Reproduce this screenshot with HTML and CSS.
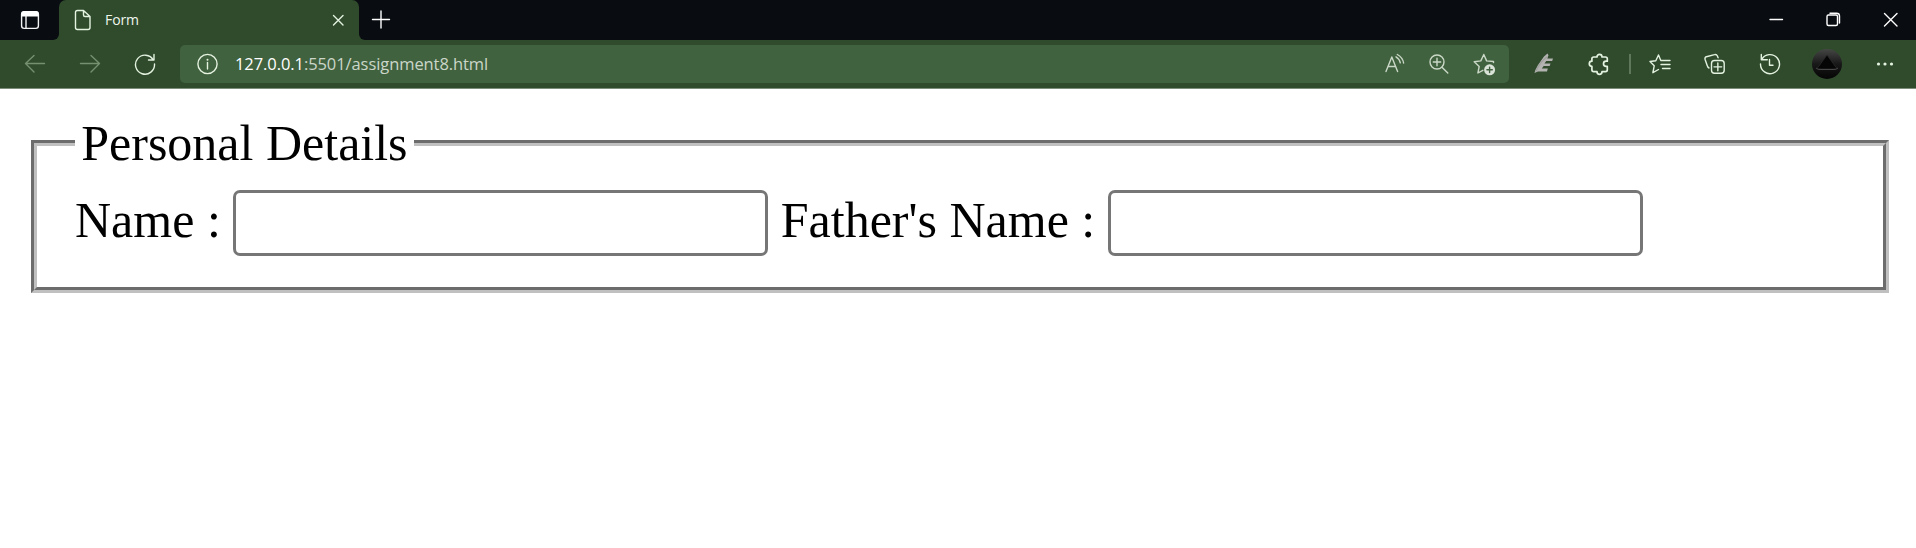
FILE: index.html
```html
<!DOCTYPE html>
<html lang="en">
<head>
<meta charset="utf-8">
<title>Form</title>
<link rel="stylesheet" href="styles.css">
</head>
<body>
<header class="browser">
  <div class="tabstrip">
    <div class="tab-menu">
      <svg class="icon" viewBox="0 0 24 24"><rect x="3.6" y="3.6" width="16.8" height="16.8" rx="2.6"/><path class="solid" d="M3.5 8.5V6Q3.5 3 6.500 3h11Q20.500 3 20.500 6v2.500z"/><path d="M8 8v12"/></svg>
    </div>
    <div class="tab">
      <svg class="icon" viewBox="0 0 24 24"><path d="M4.500 4.500Q4.500 2.500 6.500 2.500h6l6.500 6v11q0 2-2 2H6.500q-2 0-2-2zM12.500 2.500V7q0 1.500 1.500 1.500h5"/></svg>
      <span class="tab-title">Form</span>
      <svg class="icon close" viewBox="0 0 24 24"><path d="M7.500 7.500l9.500 9.500M17 7.500L7.500 17"/></svg>
    </div>
    <svg class="icon new-tab" viewBox="0 0 24 24"><path d="M11 3v17M2.500 11.500h17"/></svg>
    <div class="window-controls">
      <svg class="icon" viewBox="0 0 24 24"><path d="M5 11.500h12.500"/></svg>
      <svg class="icon" viewBox="0 0 24 24"><rect x="5" y="7" width="10.500" height="10.500" rx="1.500"/><path d="M8 5.300h6.500Q17.500 5.300 17.500 8v7"/></svg>
      <svg class="icon" viewBox="0 0 24 24"><path d="M5.500 5.500l12.500 12.500M18 5.500L5.500 18"/></svg>
    </div>
  </div>
  <div class="toolbar">
    <div class="nav">
      <svg class="icon muted" viewBox="0 0 24 24"><path d="M21.500 11.500H2.500M11 3.500l-8.500 8 8.500 8.500"/></svg>
      <svg class="icon muted" viewBox="0 0 24 24"><path d="M2.500 11.500h19M13 3.500l8.500 8-8.500 8.500"/></svg>
      <svg class="icon" viewBox="0 0 24 24"><path d="M20.300 8A9.500 9.500 0 1 0 21.500 12M21 2.500V8h-5.500"/></svg>
    </div>
    <div class="address">
      <svg class="icon" viewBox="0 0 24 24"><circle cx="12.500" cy="12" r="9.600"/><path d="M12.500 10.500v6.500"/><circle class="solid" cx="12.500" cy="7.700" r="1"/></svg>
      <span class="url"><b>127.0.0.1</b>:5501/assignment8.html</span>
      <div class="address-tools">
        <svg class="icon" viewBox="0 0 24 24"><path d="M4 19.500L9.800 5l5.800 14.500M5.900 14.500h7.800M14 4.800q3.500 2 4.300 6M15.300 2.500q5.500 3 6.300 8.500"/></svg>
        <svg class="icon" viewBox="0 0 24 24"><circle cx="10" cy="10" r="7"/><path d="M15 15.200l5.800 5.800M10 6.300v7.400M6.300 10h7.400"/></svg>
        <svg class="icon" viewBox="0 0 24 24"><path d="M21.500 10.500V9.500L14.600 8.900 11.800 2.500 8.800 8.900 2.200 9.700 7.200 14.400 5.900 21l5-2.700"/><circle class="solid" cx="17.600" cy="17.800" r="5.500"/><path class="plus" d="M17.600 15.100v5.400M14.900 17.800h5.400"/></svg>
      </div>
    </div>
    <div class="actions">
      <svg class="icon" viewBox="0 0 24 24"><path class="feather" d="M2.500 21Q3 18 6 13L12 4.500 15.500 1.500l1 1.800-1.200 3.200h5.700l-.8 2.500h-6l-1.700 2.500h6l-.8 2.500h-6L9.800 16.500h6L15 19.500H6z"/><path class="feather-shade" d="M4 19Q9 9 15 5"/></svg>
      <svg class="icon" viewBox="0 0 24 24"><path class="bold" d="M6.700 5h3.300V4.800a2.500 2.500 0 0 1 5 0V5h3.500q1.800 0 1.800 1.800V9.200h-1.200a2.600 2.600 0 0 0 0 5.200h1.200v3.400q0 1.800-1.800 1.800H15v.2a2.500 2.500 0 0 1-5 0v-.2H6.700q-1.800 0-1.800-1.800v-3.400a2.600 2.600 0 0 1 0-5.200V6.800q0-1.800 1.800-1.800z"/></svg>
      <span class="divider"></span>
      <svg class="icon" viewBox="0 0 24 24"><path d="M14.500 8.500h-1.700L10.500 3 7.800 8.700 2 9.500l4.200 4.300L4.900 20.700l5.600-3.200M15 8.500h7M13 12.500h9M14.500 16.500h7.500" /></svg>
      <svg class="icon" viewBox="0 0 24 24"><rect x="8.500" y="8.500" width="12.700" height="12.700" rx="3"/><path d="M14.850 11v7.700M11 14.850h7.700M6 16Q4.800 15.500 4.200 13.500L2.100 7.500Q1.500 5.500 3.400 4.700L11.500 2.600Q13.500 2 14.400 4l.7 1.800"/></svg>
      <svg class="icon" viewBox="0 0 24 24"><path d="M3.700 7.500A9.500 9.500 0 1 1 2.500 12M3.300 2.500V7.800h6M11.500 7.500v5.800H15"/></svg>
      <svg class="avatar" viewBox="0 0 30 30"><defs><linearGradient id="orb" x1="0" y1="0" x2="0" y2="1"><stop offset="0" stop-color="#454745"/><stop offset=".5" stop-color="#181818"/><stop offset="1" stop-color="#050505"/></linearGradient></defs><circle cx="15" cy="15" r="15" fill="url(#orb)"/><path d="M15 6l8 11q3 3-1 3H8q-4 0-1-3z" fill="#050505" stroke="#2c2c2c" stroke-width=".7"/><path d="M4 19q2 2 5 1.500h12q3 .5 5-1.500" fill="none" stroke="#484848"/></svg>
      <svg class="icon" viewBox="0 0 24 24"><g class="solid"><circle cx="5.500" cy="12" r="1.600"/><circle cx="12" cy="12" r="1.600"/><circle cx="18.500" cy="12" r="1.600"/></g></svg>
    </div>
  </div>
</header>
<main class="page">
  <fieldset class="details">
    <legend>Personal Details</legend>
    <label for="name">Name :</label>
    <input class="field" id="name" type="text">
    <label for="father">Father's Name :</label>
    <input class="field" id="father" type="text">
  </fieldset>
</main>
</body>
</html>
```
FILE: styles.css
```css
* { box-sizing: border-box; }
html, body { height: 100%; }
body { margin: 0; background: #fff; color: #000; overflow: hidden; }

.browser { font-family: "Open Sans", "Noto Sans", sans-serif; color: #eef6ec; background: #2f4b2c; }
.icon { display: block; flex: none; width: 24px; height: 24px; fill: none; stroke: #e4f2e0; stroke-width: 1.4; stroke-linecap: round; stroke-linejoin: round; }
.icon .solid { fill: #e4f2e0; stroke: none; }
.icon .bold { stroke-width: 1.7; }
.icon .plus { stroke: #41623f; }
.icon .feather { fill: #b3b3b1; stroke: none; }
.icon .feather-shade { stroke: #a0a19e; }
.icon.muted { stroke: #75906f; }

.tabstrip { display: flex; height: 40px; background: #2f4b2c; }
.tab-menu { display: flex; align-items: center; width: 59px; padding-left: 18px; background: #090d11; border-bottom-right-radius: 6px; }
.tab-menu .icon { stroke: #f4f4f4; }
.tab-menu .icon .solid { fill: #fff; }
.tab { display: flex; align-items: center; width: 300px; padding: 0 9px 0 12px; background: #2f4b2c; box-shadow: 0 -6px 0 #090d11; border-radius: 7px 7px 0 0; }
.tab-title { flex: 1; padding-left: 10px; font-size: 14px; line-height: 20px; letter-spacing: -0.1px; }
.new-tab { width: 46px; height: 40px; padding: 8px 11px; background: #090d11; border-bottom-left-radius: 6px; stroke: #fff; }
.window-controls { display: flex; flex: 1; align-items: center; justify-content: flex-end; gap: 33px; padding-right: 13px; background: #090d11; }
.window-controls .icon { stroke: #fff; }

.toolbar { display: flex; align-items: center; height: 49px; padding: 0 19px 0 23px; border-bottom: 1px solid #7c8d7a; }
.nav { display: flex; gap: 31px; width: 157px; }
.address { display: flex; align-items: center; width: 1329px; height: 38px; padding: 0 13px 0 15px; border-radius: 5px; background: #41623f; }
.url { flex: 1; padding-left: 16px; font-size: 16.500px; line-height: 24px; letter-spacing: -0.080px; color: #cbd6c9; }
.url b { font-weight: 400; color: #fff; }
.address-tools { display: flex; gap: 21px; }
.address-tools .icon { stroke: #cad8c7; }
.address-tools .solid { fill: #d8e2d6; }
.actions { display: flex; flex: 1; align-items: center; justify-content: space-between; padding-left: 23px; }
.divider { width: 2px; height: 20px; margin: 0 -14px 0 -12px; background: #5f785c; }
.avatar { width: 30px; height: 30px; }

.page { padding: 25px 27px 0 31px; }
.details { margin: 0; padding: 18px 38px 31px; border: 6px groove #c0c0c0; font: 50px/57px "Liberation Serif", "Times New Roman", serif; }
.details legend { padding: 1px 6.250px; line-height: 56px; }
.field { width: 535px; height: 66px; margin: 0; padding: 3px 6px; border: 3px solid #767676; border-radius: 7px; background: #fff; font: 42px "Liberation Sans", Arial, sans-serif; }
```
